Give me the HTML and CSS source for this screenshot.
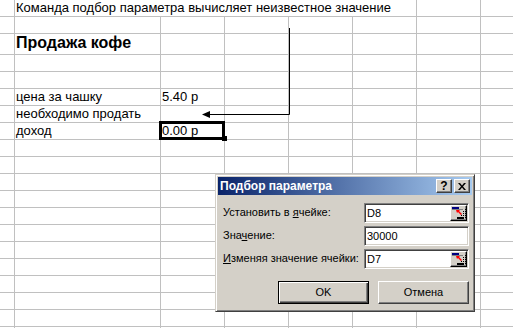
FILE: index.html
```html
<!DOCTYPE html>
<html lang="ru">
<head>
<meta charset="utf-8">
<title>Подбор параметра</title>
<link rel="stylesheet" href="styles.css">
</head>
<body>
<div class="sheet">
  <div class="grid">
    <!-- row 0 -->
    <div class="c"></div><div class="c t s5">Команда подбор параметра вычисляет неизвестное значение</div><div class="c"></div><div class="c e"></div>
    <!-- row 1 -->
    <div class="c"></div><div class="c"></div><div class="c"></div><div class="c"></div><div class="c"></div><div class="c"></div><div class="c"></div><div class="c e"></div>
    <!-- row 2 -->
    <div class="c"></div><div class="c t big">Продажа кофе</div><div class="c"></div><div class="c"></div><div class="c"></div><div class="c"></div><div class="c"></div><div class="c e"></div>
    <!-- row 3 -->
    <div class="c"></div><div class="c"></div><div class="c"></div><div class="c"></div><div class="c"></div><div class="c"></div><div class="c"></div><div class="c e"></div>
    <!-- row 4 -->
    <div class="c"></div><div class="c"></div><div class="c"></div><div class="c"></div><div class="c"></div><div class="c"></div><div class="c"></div><div class="c e"></div>
    <!-- row 5 -->
    <div class="c"></div><div class="c t">цена за чашку</div><div class="c t">5.40 р</div><div class="c"></div><div class="c"></div><div class="c"></div><div class="c"></div><div class="c e"></div>
    <!-- row 6 -->
    <div class="c"></div><div class="c t">необходимо продать</div><div class="c"></div><div class="c"></div><div class="c"></div><div class="c"></div><div class="c"></div><div class="c e"></div>
    <!-- row 7 -->
    <div class="c"></div><div class="c t">доход</div><div class="c t sel">0.00 р</div><div class="c"></div><div class="c"></div><div class="c"></div><div class="c"></div><div class="c e"></div>
    <!-- rows 8-19 -->
    <div class="c"></div><div class="c"></div><div class="c"></div><div class="c"></div><div class="c"></div><div class="c"></div><div class="c"></div><div class="c e"></div>
    <div class="c"></div><div class="c"></div><div class="c"></div><div class="c"></div><div class="c"></div><div class="c"></div><div class="c"></div><div class="c e"></div>
    <div class="c"></div><div class="c"></div><div class="c"></div><div class="c"></div><div class="c"></div><div class="c"></div><div class="c"></div><div class="c e"></div>
    <div class="c"></div><div class="c"></div><div class="c"></div><div class="c"></div><div class="c"></div><div class="c"></div><div class="c"></div><div class="c e"></div>
    <div class="c"></div><div class="c"></div><div class="c"></div><div class="c"></div><div class="c"></div><div class="c"></div><div class="c"></div><div class="c e"></div>
    <div class="c"></div><div class="c"></div><div class="c"></div><div class="c"></div><div class="c"></div><div class="c"></div><div class="c"></div><div class="c e"></div>
    <div class="c"></div><div class="c"></div><div class="c"></div><div class="c"></div><div class="c"></div><div class="c"></div><div class="c"></div><div class="c e"></div>
    <div class="c"></div><div class="c"></div><div class="c"></div><div class="c"></div><div class="c"></div><div class="c"></div><div class="c"></div><div class="c e"></div>
    <div class="c"></div><div class="c"></div><div class="c"></div><div class="c"></div><div class="c"></div><div class="c"></div><div class="c"></div><div class="c e"></div>
    <div class="c"></div><div class="c"></div><div class="c"></div><div class="c"></div><div class="c"></div><div class="c"></div><div class="c"></div><div class="c e"></div>
    <div class="c"></div><div class="c"></div><div class="c"></div><div class="c"></div><div class="c"></div><div class="c"></div><div class="c"></div><div class="c e"></div>
    <div class="c"></div><div class="c"></div><div class="c"></div><div class="c"></div><div class="c"></div><div class="c"></div><div class="c"></div><div class="c e"></div>
  </div>

  <svg class="arrow" width="513" height="328" viewBox="0 0 513 328">
    <path d="M289.5 28 V114.5 H208" fill="none" stroke="#000" stroke-width="1"/>
    <polygon points="202,114.5 210,111 210,118" fill="#000"/>
  </svg>

  <div class="dlg">
    <div class="title">
      <span class="ttext">Подбор параметра</span>
      <div class="tbtns">
        <span class="tb">?</span>
        <span class="tb"><svg width="8" height="7" viewBox="0 0 8 7"><path d="M0 0h2l2 2.5L6 0h2L5 3.5 8 7H6L4 4.5 2 7H0l3-3.5z" fill="#000"/></svg></span>
      </div>
    </div>
    <div class="body">
      <div class="frow">
        <span class="lbl">Установить в <u>я</u>чейке:</span>
        <div class="inp"><span class="val">D8</span><span class="ref"><svg width="15" height="14" viewBox="0 0 15 14"><rect x="1" y="1" width="7" height="2" fill="#000080"/><rect x="1" y="3" width="11" height="1" fill="#808080"/><path d="M12 5v1M12 7v1M12 9v1M14 3v1M14 5v1M14 7v1M14 9v1M10 9v1M12 11v1M14 11v1" stroke="#000" stroke-width="1" transform="translate(0.5 0)"/><polygon points="5,4 9,4 8,5 11,8 10,9 7,6 6,7" fill="#ff0000"/><rect x="6" y="11" width="7" height="2" fill="#000"/></svg></span></div>
      </div>
      <div class="frow">
        <span class="lbl">Зна<u>ч</u>ение:</span>
        <div class="inp"><span class="val">30000</span></div>
      </div>
      <div class="frow">
        <span class="lbl"><u>И</u>зменяя значение ячейки:</span>
        <div class="inp"><span class="val">D7</span><span class="ref"><svg width="15" height="14" viewBox="0 0 15 14"><rect x="1" y="1" width="7" height="2" fill="#000080"/><rect x="1" y="3" width="11" height="1" fill="#808080"/><path d="M12 5v1M12 7v1M12 9v1M14 3v1M14 5v1M14 7v1M14 9v1M10 9v1M12 11v1M14 11v1" stroke="#000" stroke-width="1" transform="translate(0.5 0)"/><polygon points="5,4 9,4 8,5 11,8 10,9 7,6 6,7" fill="#ff0000"/><rect x="6" y="11" width="7" height="2" fill="#000"/></svg></span></div>
      </div>
      <div class="btns">
        <span class="btn def">OK</span>
        <span class="btn">Отмена</span>
      </div>
    </div>
  </div>
</div>
</body>
</html>
```

FILE: styles.css
```css
html, body {
  margin: 0;
  padding: 0;
  background: #fff;
}
body {
  width: 513px;
  height: 328px;
  overflow: hidden;
  font-family: "Liberation Sans", Arial, sans-serif;
}
.sheet {
  position: relative;
  width: 513px;
  height: 328px;
  overflow: hidden;
}
.grid {
  display: grid;
  grid-template-columns: 15px 146px 64px 64px 64px 64px 64px 32px;
  grid-template-rows: 17px 17px 21px repeat(17, 17px);
}
.c {
  box-sizing: border-box;
  border-right: 1px solid #c0c0c0;
  border-bottom: 1px solid #c0c0c0;
  min-width: 0;
}
.c.e {
  border-right: none;
}
.t {
  font-size: 13px;
  line-height: 16px;
  padding-left: 1px;
  white-space: nowrap;
  color: #000;
}
.s5 {
  grid-column: span 5;
}
.big {
  font-size: 16px;
  font-weight: bold;
  line-height: 17px;
}
.sel {
  position: relative;
  overflow: visible;
}
.sel::after {
  content: "";
  position: absolute;
  left: -2px;
  top: -2px;
  width: 66px;
  height: 19px;
  box-sizing: border-box;
  border: 3px solid #000;
}
.sel::before {
  content: "";
  position: absolute;
  left: 61px;
  top: 13px;
  width: 5px;
  height: 5px;
  background: #000;
  z-index: 1;
}
.arrow {
  position: absolute;
  left: 0;
  top: 0;
  pointer-events: none;
}

/* dialog */
.dlg {
  position: absolute;
  left: 215px;
  top: 174px;
  width: 260px;
  height: 138px;
  box-sizing: border-box;
  background: #d4d0c8;
  border: 1px solid;
  border-color: #d4d0c8 #404040 #404040 #d4d0c8;
  box-shadow: inset 1px 1px #fff, inset -1px -1px #808080;
  padding: 2px;
  display: flex;
  flex-direction: column;
  font-size: 11px;
  color: #000;
}
.title {
  height: 18px;
  background: linear-gradient(to right, #0a246a, #a6caf0);
  display: flex;
  align-items: center;
  justify-content: space-between;
  padding: 0 2px 0 2px;
}
.ttext {
  color: #fff;
  font-weight: bold;
  font-size: 12px;
  line-height: 14px;
}
.tbtns {
  display: flex;
  gap: 2px;
}
.tb {
  box-sizing: border-box;
  width: 16px;
  height: 14px;
  background: #d4d0c8;
  border: 1px solid;
  border-color: #fff #404040 #404040 #fff;
  box-shadow: inset -1px -1px #808080;
  display: flex;
  align-items: center;
  justify-content: center;
  font-weight: bold;
  font-size: 12px;
  line-height: 12px;
  color: #000;
}
.body {
  flex: 1;
  display: flex;
  flex-direction: column;
  gap: 3px;
  padding: 8px 3px 0 5px;
}
.frow {
  display: flex;
  align-items: center;
  justify-content: space-between;
  height: 20px;
}
.lbl {
  line-height: 13px;
  margin-top: -2px;
  white-space: nowrap;
}
.lbl u {
  text-decoration-thickness: 1px;
  text-underline-offset: 1px;
}
.inp {
  box-sizing: border-box;
  width: 105px;
  height: 20px;
  background: #fff;
  border: 1px solid;
  border-color: #808080 #fff #fff #808080;
  box-shadow: inset 1px 1px #404040, inset -1px -1px #d4d0c8;
  padding: 1px;
  display: flex;
  align-items: center;
  justify-content: space-between;
}
.val {
  padding-left: 1px;
  font-size: 11px;
  line-height: 14px;
}
.ref {
  box-sizing: border-box;
  width: 17px;
  height: 16px;
  background: #d4d0c8;
  border: 1px solid;
  border-color: #fff #000 #000 #fff;
  box-shadow: inset -1px -1px #808080;
  display: flex;
}
.ref svg {
  display: block;
}
.btns {
  display: flex;
  justify-content: flex-end;
  gap: 9px;
  margin-top: 9px;
}
.btn {
  box-sizing: border-box;
  width: 91px;
  height: 23px;
  background: #d4d0c8;
  border: 1px solid;
  border-color: #fff #404040 #404040 #fff;
  box-shadow: inset -1px -1px #808080;
  display: flex;
  align-items: center;
  justify-content: center;
  font-size: 11px;
  line-height: 13px;
}
.btn.def {
  border-color: #000;
  box-shadow: inset 1px 1px #fff, inset -1px -1px #404040, inset -2px -2px #808080;
}
```
